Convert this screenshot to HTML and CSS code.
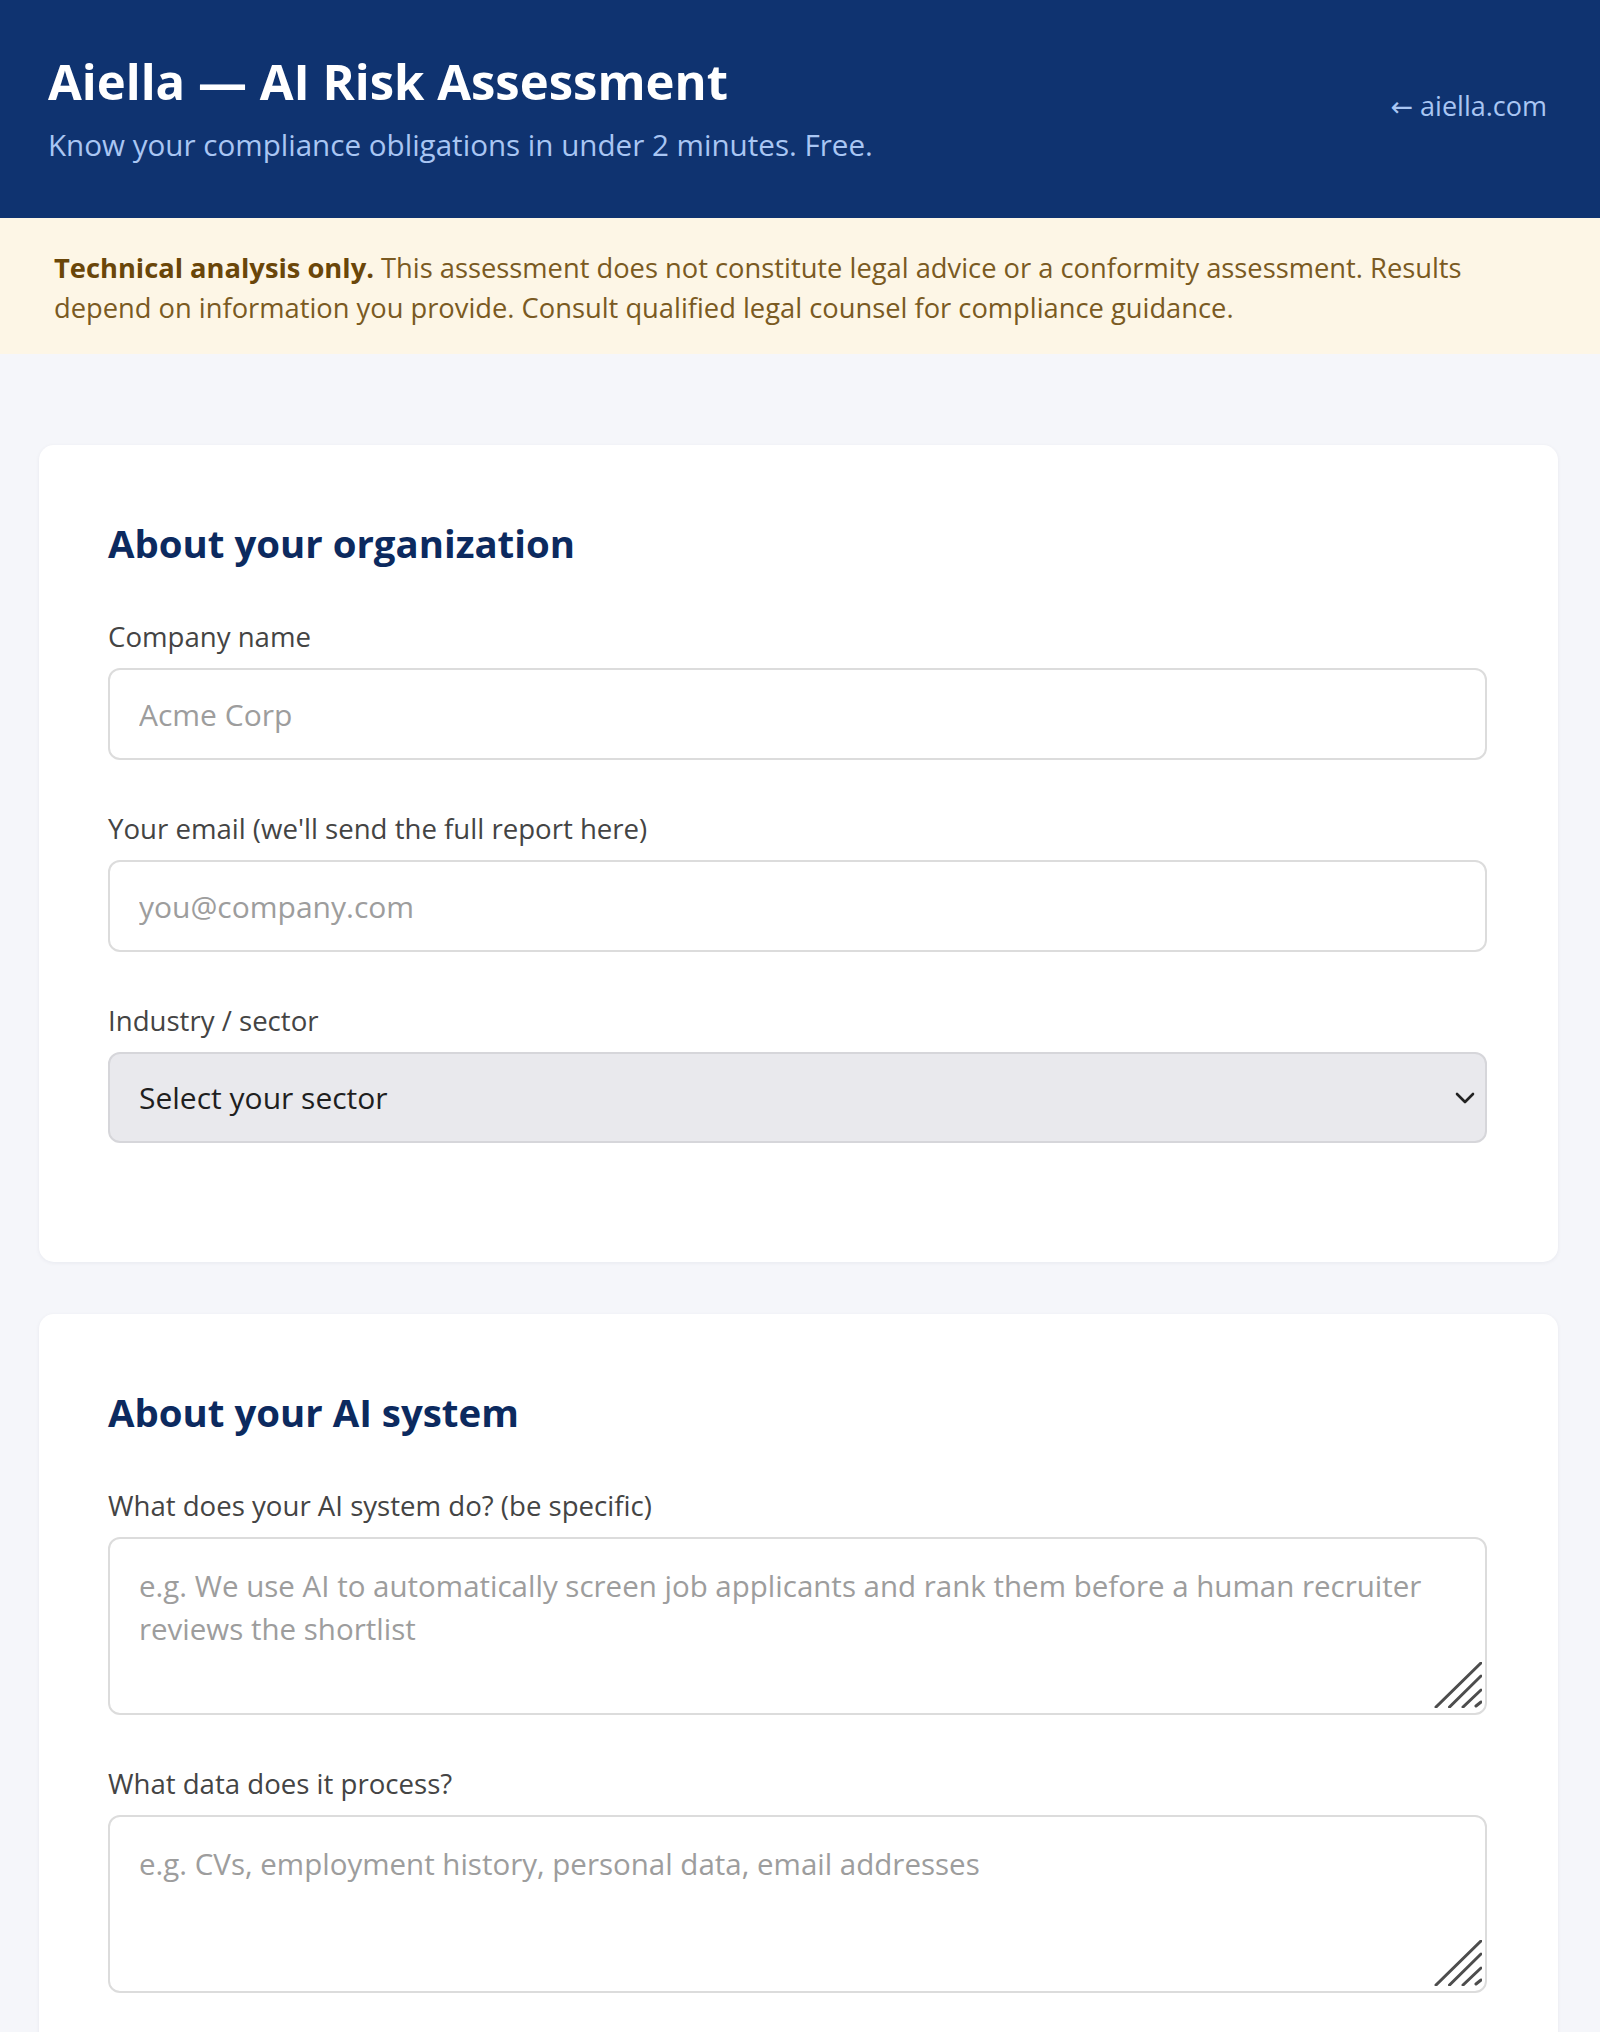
FILE: index.html
```html
<!DOCTYPE html>
<html lang="en">
<head>
<meta charset="utf-8">
<title>Aiella — AI Risk Assessment</title>
<link rel="stylesheet" href="styles.css">
</head>
<body>
<header class="topbar">
  <div class="brand">
    <h1 class="title">Aiella — AI Risk Assessment</h1>
    <p class="tagline">Know your compliance obligations in under 2 minutes. Free.</p>
  </div>
  <a class="back" href="#">← aiella.com</a>
</header>

<div class="notice"><strong>Technical analysis only.</strong> This assessment does not constitute legal advice or a conformity assessment. Results<br>depend on information you provide. Consult qualified legal counsel for compliance guidance.</div>

<main class="page">
  <section class="card">
    <h2 class="card-title">About your organization</h2>
    <div class="field">
      <label class="label" for="company">Company name</label>
      <input class="input" id="company" type="text" placeholder="Acme Corp">
    </div>
    <div class="field">
      <label class="label" for="email">Your email (we'll send the full report here)</label>
      <input class="input" id="email" type="email" placeholder="you@company.com">
    </div>
    <div class="field">
      <label class="label" for="sector">Industry / sector</label>
      <div class="control">
        <select class="input select" id="sector">
          <option>Select your sector</option>
          <option>Financial services</option>
          <option>Healthcare</option>
          <option>Human resources / recruitment</option>
          <option>Education</option>
          <option>Public sector</option>
          <option>Retail / e-commerce</option>
          <option>Other</option>
        </select>
        <svg class="chevron" viewBox="0 0 20 12" aria-hidden="true"><polyline points="2,2 10,10 18,2" fill="none" stroke="#222" stroke-width="2.6" stroke-linecap="round" stroke-linejoin="round"/></svg>
      </div>
    </div>
  </section>

  <section class="card">
    <h2 class="card-title">About your AI system</h2>
    <div class="field">
      <label class="label" for="purpose">What does your AI system do? (be specific)</label>
      <div class="control">
        <textarea class="input textarea" id="purpose" placeholder="e.g. We use AI to automatically screen job applicants and rank them before a human recruiter&#10;reviews the shortlist"></textarea>
        <svg class="grip" viewBox="0 0 48 46" aria-hidden="true"><g stroke="#4d4d4d" stroke-width="3" stroke-linecap="round"><line x1="2" y1="45" x2="47" y2="1"/><line x1="15.5" y1="45" x2="47" y2="14"/><line x1="29" y1="45" x2="47" y2="28"/><line x1="42" y1="44" x2="47" y2="40"/></g></svg>
      </div>
    </div>
    <div class="field">
      <label class="label" for="data">What data does it process?</label>
      <div class="control">
        <textarea class="input textarea" id="data" placeholder="e.g. CVs, employment history, personal data, email addresses"></textarea>
        <svg class="grip" viewBox="0 0 48 46" aria-hidden="true"><g stroke="#4d4d4d" stroke-width="3" stroke-linecap="round"><line x1="2" y1="45" x2="47" y2="1"/><line x1="15.5" y1="45" x2="47" y2="14"/><line x1="29" y1="45" x2="47" y2="28"/><line x1="42" y1="44" x2="47" y2="40"/></g></svg>
      </div>
    </div>
  </section>
</main>
</body>
</html>
```

FILE: styles.css
```css
* {
  box-sizing: border-box;
}

body {
  margin: 0;
  background: #f5f6fa;
  font-family: "Open Sans", "Noto Sans", "DejaVu Sans", sans-serif;
  color: #222;
}

/* Header */
.topbar {
  display: flex;
  justify-content: space-between;
  align-items: center;
  background: #0f3370;
  padding: 52px 53px 53px 48px;
}

.title {
  margin: 0;
  font-size: 49px;
  line-height: 58px;
  font-weight: 700;
  color: #ffffff;
}

.tagline {
  margin: 15px 0 0;
  font-size: 29.6px;
  line-height: 40px;
  color: #a9c6f3;
}

.back {
  font-size: 27px;
  line-height: 38px;
  color: #a9c6f3;
  text-decoration: none;
  margin-bottom: 6px;
}

/* Disclaimer banner */
.notice {
  background: #fdf6e6;
  color: #7a5a22;
  font-size: 27.3px;
  line-height: 40px;
  padding: 30px 54px 26px;
}

.notice strong {
  color: #6a4609;
  font-weight: 700;
}

/* Page & cards */
.page {
  padding: 91px 42px 60px 39px;
}

.card {
  background: #ffffff;
  border-radius: 15px;
  box-shadow: 0 1px 4px rgba(20, 35, 70, 0.06);
  padding: 70px 71px 70px 69px;
}

.card + .card {
  margin-top: 52px;
}

.card-title {
  margin: 0 0 46px;
  font-size: 38.4px;
  line-height: 56px;
  font-weight: 700;
  color: #0c2a5f;
}

.field {
  display: flex;
  flex-direction: column;
  gap: 13px;
  margin-bottom: 49px;
}

.label {
  font-size: 27.6px;
  line-height: 38px;
  color: #444444;
}

.control {
  position: relative;
}

.input {
  display: block;
  width: 100%;
  height: 92px;
  border: 2px solid #dcdcdc;
  border-radius: 12px;
  padding: 0 29px;
  font-family: inherit;
  font-size: 30px;
  color: #222;
  background: #ffffff;
  outline: none;
}

.input::placeholder {
  color: #9d9d9d;
  opacity: 1;
}

.select {
  appearance: none;
  -webkit-appearance: none;
  height: 91px;
  background: #e9e9ed;
  border-color: #d6d6da;
  color: #1f1f1f;
  padding-right: 60px;
}

.chevron {
  position: absolute;
  right: 12px;
  top: 50%;
  width: 20px;
  height: 12px;
  margin-top: -6px;
  pointer-events: none;
}

.textarea {
  height: 178px;
  padding: 25px 29px 21px;
  font-size: 29.5px;
  line-height: 43px;
  resize: none;
}

.grip {
  position: absolute;
  right: 5px;
  bottom: 7px;
  width: 48px;
  height: 46px;
  pointer-events: none;
}
```
